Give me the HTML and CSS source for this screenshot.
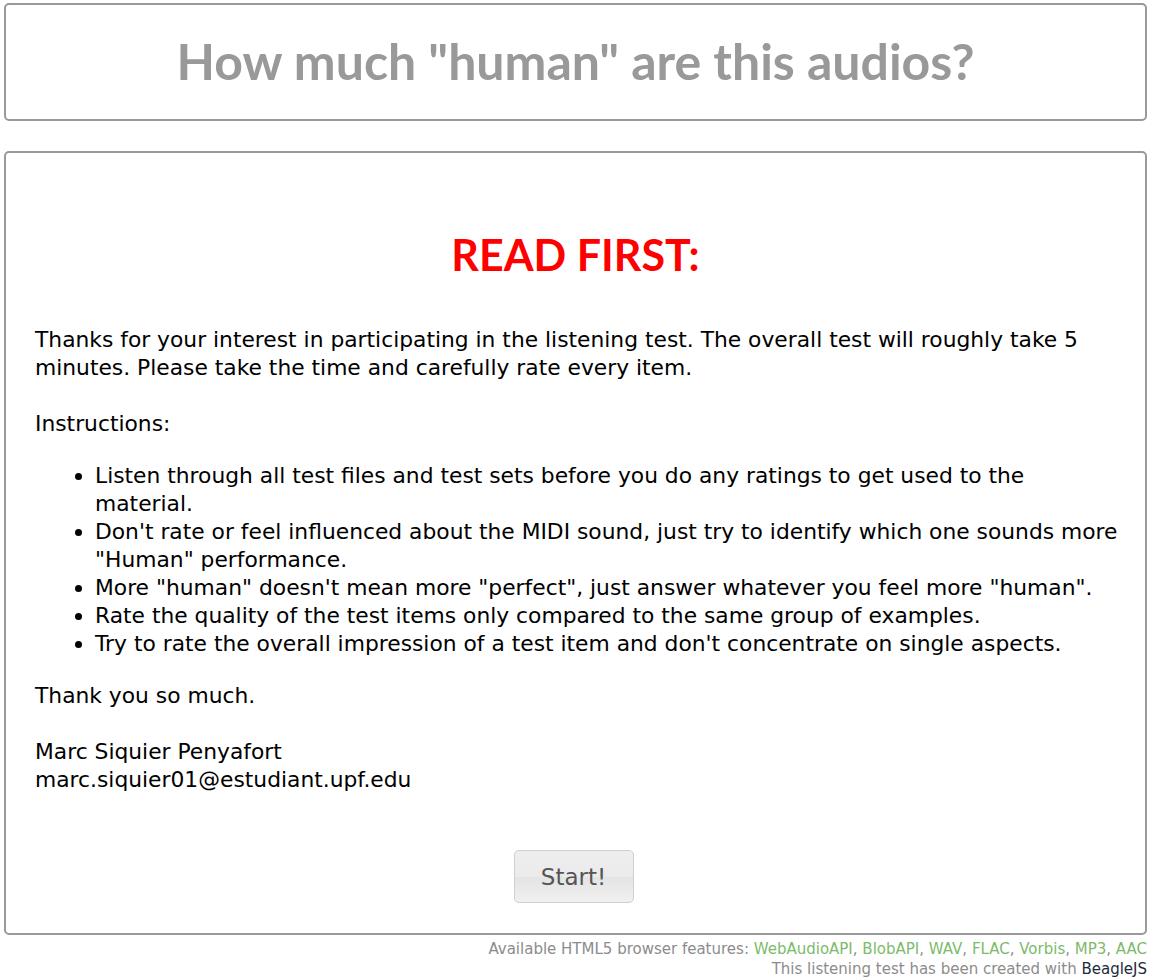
FILE: index.html
```html
<!DOCTYPE html>
<html>
<head>
<meta charset="utf-8">
<title>Listening test</title>
<link rel="stylesheet" href="styles.css">
</head>
<body>
<div class="page">
  <header class="panel header-panel">
    <h1 class="title">How much "human" are this audios?</h1>
  </header>
  <main class="panel content-panel">
    <h2 class="read-first">READ FIRST:</h2>
    <div class="text">
      <p class="intro">Thanks for your interest in participating in the listening test. The overall test will roughly take 5 minutes. Please take the time and carefully rate every item.<br><br>Instructions:</p>
      <ul class="rules">
        <li>Listen through all test files and test sets before you do any ratings to get used to the material.</li>
        <li>Don't rate or feel influenced about the MIDI sound, just try to identify which one sounds more "Human" performance.</li>
        <li>More "human" doesn't mean more "perfect", just answer whatever you feel more "human".</li>
        <li>Rate the quality of the test items only compared to the same group of examples.</li>
        <li>Try to rate the overall impression of a test item and don't concentrate on single aspects.</li>
      </ul>
      <p class="outro">Thank you so much.<br><br>Marc Siquier Penyafort<br>marc.siquier01@estudiant.upf.edu</p>
    </div>
    <div class="actions">
      <button class="start-btn" type="button">Start!</button>
    </div>
  </main>
  <footer class="footer">
    <div>Available HTML5 browser features: <span class="ok">WebAudioAPI</span>, <span class="ok">BlobAPI</span>, <span class="ok">WAV</span>, <span class="ok">FLAC</span>, <span class="ok">Vorbis</span>, <span class="ok">MP3</span>, <span class="ok">AAC</span></div>
    <div>This listening test has been created with <a class="beagle" href="#">BeagleJS</a></div>
  </footer>
</div>
</body>
</html>
```
FILE: styles.css
```css
html, body {
  margin: 0;
  padding: 0;
  background: #fff;
}
body {
  font-family: "DejaVu Sans", Verdana, sans-serif;
  color: #000;
}
.page {
  padding: 3px 10px 0 4px;
  display: flex;
  flex-direction: column;
}
.panel {
  border: 2px solid #999;
  border-radius: 5px;
  background: #fff;
}
.header-panel {
  height: 114px;
  display: flex;
  align-items: center;
  justify-content: center;
}
.title {
  margin: 0;
  font-family: Lato, "DejaVu Sans", sans-serif;
  font-weight: bold;
  font-size: 50px;
  line-height: 60px;
  color: #999;
  text-align: center;
  position: relative;
  top: -1px;
}
.content-panel {
  margin-top: 30px;
  padding: 0 22px 0 29px;
  height: 780px;
  display: flex;
  flex-direction: column;
}
.read-first {
  margin: 76px 0 0;
  font-family: Lato, "DejaVu Sans", sans-serif;
  font-weight: bold;
  font-size: 43px;
  line-height: 52px;
  color: #f00;
  text-align: center;
  padding-right: 7px;
}
.text {
  margin-top: 45px;
  font-size: 21.8px;
  line-height: 28px;
}
.intro, .outro {
  margin: 0;
}
.rules {
  margin: 24px 0;
  padding-left: 60px;
}
.rules li {
  margin: 0;
}
.actions {
  margin-top: 56px;
  text-align: center;
  padding-right: 7px;
}
.start-btn {
  width: 120px;
  height: 53px;
  border: 1px solid #cfcfcf;
  border-radius: 5px;
  background: linear-gradient(#eeeeee 0%, #ebebeb 50%, #e4e4e4 52%, #f0f0f0 100%);
  font-family: "DejaVu Sans", Verdana, sans-serif;
  font-size: 23px;
  color: #555;
  padding: 0;
  cursor: pointer;
  margin-left: -4px;
}
.footer {
  text-align: right;
  font-family: "DejaVu Sans", Verdana, sans-serif;
  font-size: 15px;
  line-height: 20px;
  color: #8c8c8c;
  padding-top: 4px;
}
.ok {
  color: #7cbb6a;
}
.beagle {
  color: #1c2a3c;
  text-decoration: none;
}
```
